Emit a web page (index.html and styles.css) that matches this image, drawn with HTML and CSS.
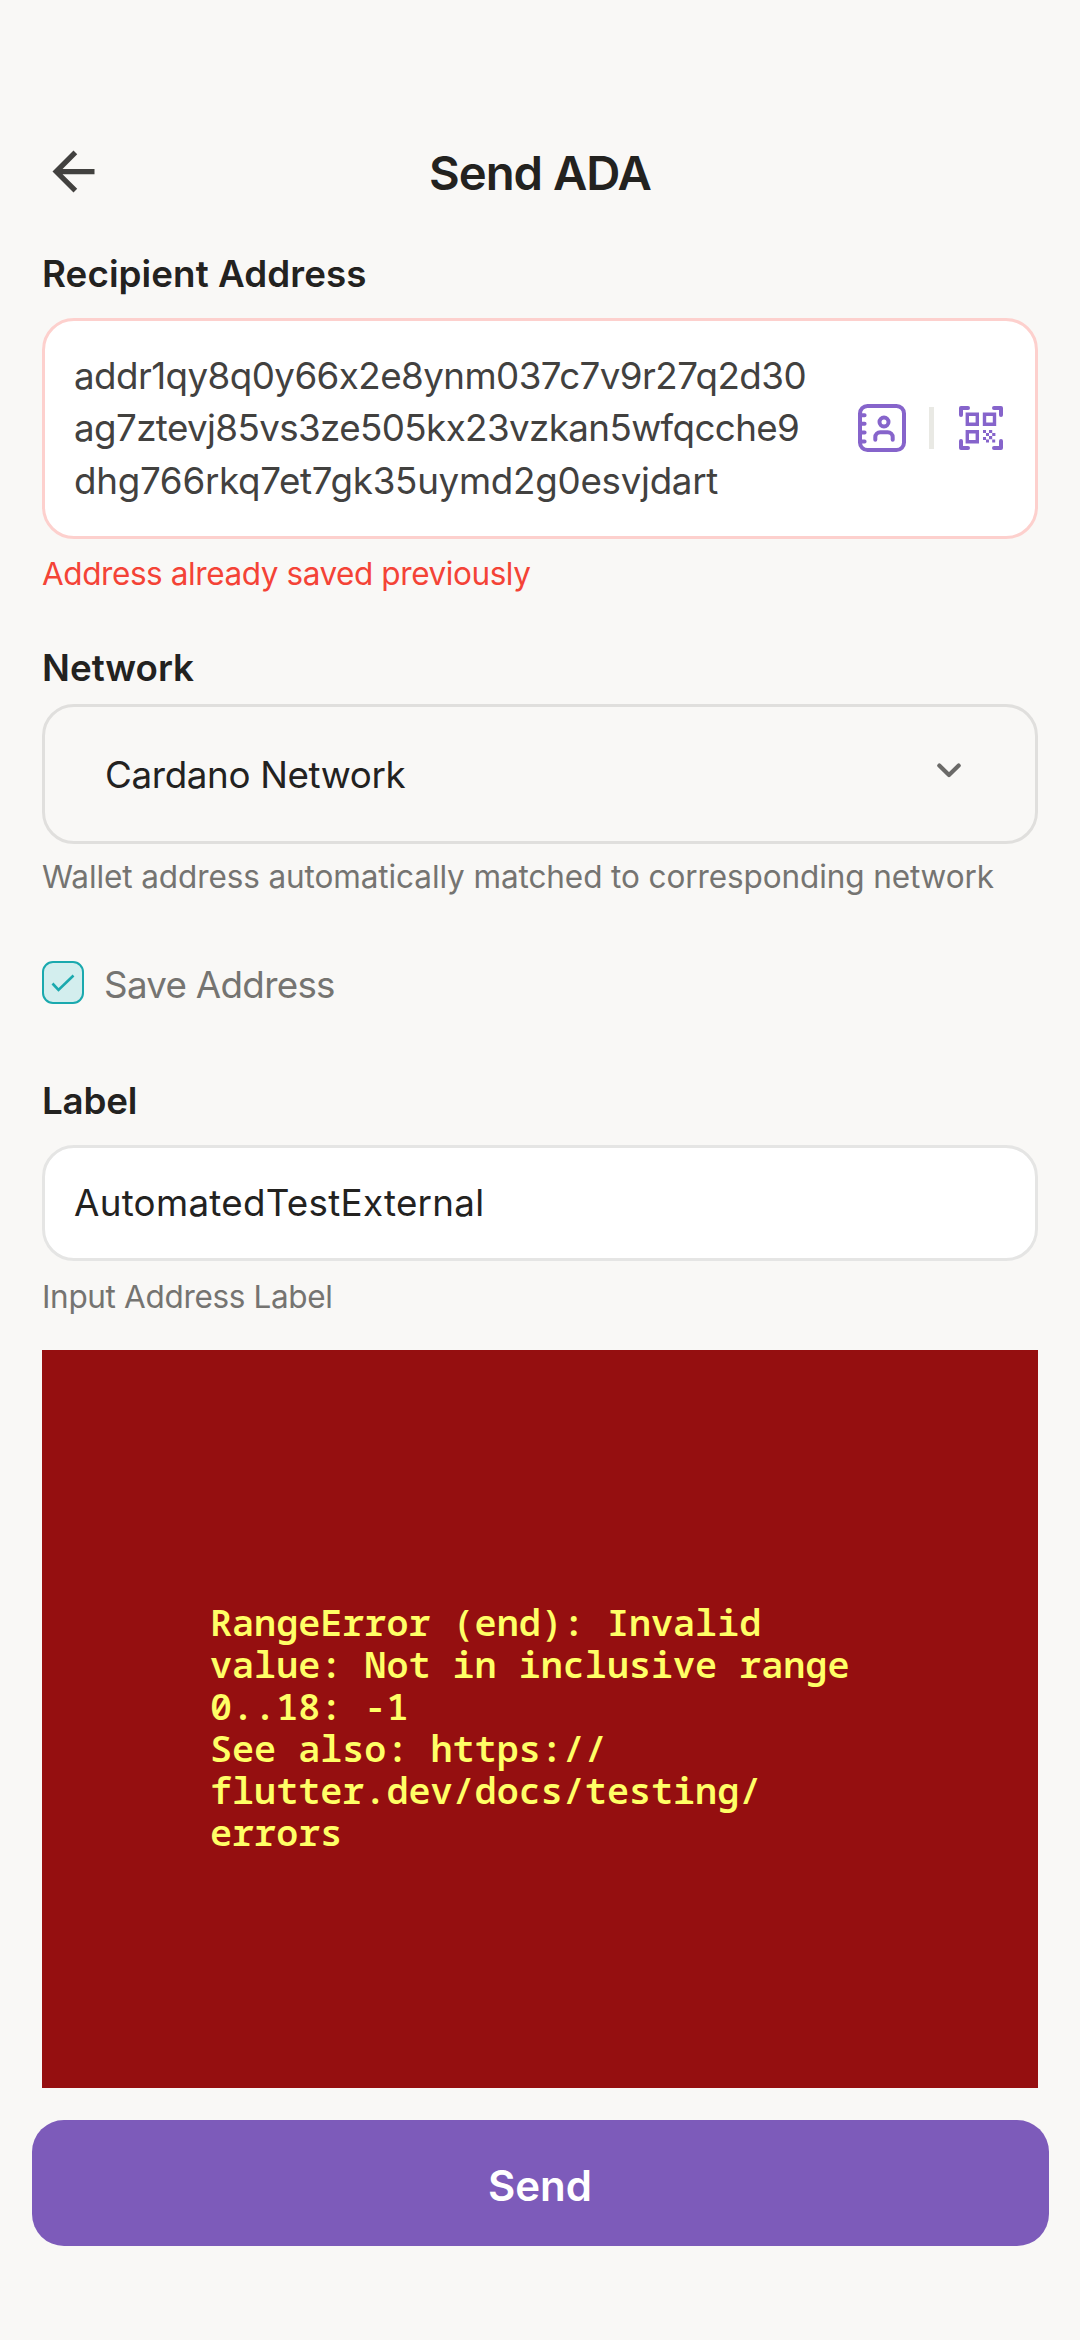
FILE: index.html
```html
<!DOCTYPE html>
<html lang="en">
<head>
<meta charset="utf-8">
<title>Send ADA</title>
<link rel="stylesheet" href="styles.css">
</head>
<body>
<main class="screen">
  <header class="header">
    <svg class="back" viewBox="0 0 24 24"><path d="M20 11H7.83l5.59-5.59L12 4l-8 8 8 8 1.41-1.41L7.83 13H20v-2z"/></svg>
    <h1 class="title"><span class="t-title">Send ADA</span></h1>
  </header>

  <section class="field recipient">
    <h2 class="label"><span class="t-recipient">Recipient Address</span></h2>
    <div class="box address-box">
      <p class="address"><span class="a1">addr1qy8q0y66x2e8ynm037c7v9r27q2d30</span><br><span class="a2">ag7ztevj85vs3ze505kx23vzkan5wfqcche9</span><br><span class="a3">dhg766rkq7et7gk35uymd2g0esvjdart</span></p>
      <div class="actions">
        <svg class="contacts" viewBox="0 0 48 48">
          <rect x="2" y="2" width="44" height="44" rx="7.5"/>
          <path d="M2 11.2h4.6M2 19.7h4.6M2 28.6h4.6M2 37.6h4.6"/>
          <circle cx="26" cy="18" r="4.5"/>
          <path d="M17.3 35.8v-2.6a5 5 0 0 1 5-5h7.4a5 5 0 0 1 5 5v2.6"/>
        </svg>
        <span class="divider"></span>
        <svg class="qr" viewBox="0 0 44 44">
          <path class="corner" d="M2 9V2h7M35 2h7v7M42 35v7h-7M9 42H2v-7"/>
          <path class="finder" d="M8.3 8.3h10v10h-10zM25.5 8.3h10v10h-10zM8.3 25.7h10v10h-10z"/>
          <path class="dots" d="M24 24h3v3h-3zM30 24h3.2v3H30zM27 27h3v3h-3zM33.2 27h3.2v3h-3.2zM30 30h3.2v3.2H30zM24 31h3v3h-3zM27 33.6h3v3h-3zM33.2 33.6h3v3h-3z"/>
        </svg>
      </div>
    </div>
    <p class="hint error"><span class="t-error">Address already saved previously</span></p>
  </section>

  <section class="field network">
    <h2 class="label"><span class="t-network">Network</span></h2>
    <div class="box select">
      <span class="t-cardano">Cardano Network</span>
      <svg class="chevron" viewBox="0 0 24 15"><path d="M2.3 2.6 12 12l9.7-9.4"/></svg>
    </div>
    <p class="hint"><span class="t-wallet">Wallet address automatically matched to corresponding network</span></p>
  </section>

  <div class="save">
    <span class="checkbox"><svg class="check" viewBox="0 0 24 18"><path d="M1.5 9.5 7.5 16 22.5 1.5"/></svg></span>
    <span class="save-text"><span class="t-save">Save Address</span></span>
  </div>

  <section class="field naming">
    <h2 class="label"><span class="t-label">Label</span></h2>
    <div class="box input"><span class="t-auto">AutomatedTestExternal</span></div>
    <p class="hint"><span class="t-input">Input Address Label</span></p>
  </section>

  <div class="crash">
    <p class="crash-text">RangeError (end): Invalid<br>value: Not in inclusive range<br>0..18: -1<br>See also: https://<br>flutter.dev/docs/testing/<br>errors</p>
  </div>

  <div class="send"><span class="t-send">Send</span></div>
</main>
</body>
</html>
```
FILE: styles.css
```css
* { box-sizing: border-box; }
body {
  margin: 0;
  background: #f9f8f6;
  font-family: Inter, "Liberation Sans", sans-serif;
  font-size: 36.75px;
  font-feature-settings: "calt" 0;
  color: #23221f;
}
h1, h2, p { margin: 0; }
svg { display: block; flex: none; }
.screen {
  width: 1080px;
  height: 2340px;
  padding: 140px 42px 0;
  overflow: hidden;
}
.header {
  display: grid;
  grid-template-columns: 63px 1fr 63px;
  height: 66px;
}
.back { width: 63px; height: 63px; fill: #42413f; }
.title { font-size: 47.25px; line-height: 66px; font-weight: 600; text-align: center; white-space: nowrap; }

.t-title { letter-spacing: -1px; }
.t-recipient { letter-spacing: 0.08px; }
.a1 { letter-spacing: -0.57px; }
.a2 { letter-spacing: -0.61px; }
.a3 { letter-spacing: -0.28px; }
.t-error { letter-spacing: -0.42px; }
.t-cardano { letter-spacing: -0.35px; }
.t-wallet { letter-spacing: -0.1px; }
.t-save { letter-spacing: -0.7px; }
.t-label { letter-spacing: -0.2px; }
.t-auto { letter-spacing: 0.28px; }
.t-input { letter-spacing: -0.34px; }

.field { display: flex; flex-direction: column; }
.recipient { margin-top: 42.6px; }
.label { font-size: 36.75px; line-height: 50px; font-weight: 600; white-space: nowrap; }
.box {
  display: flex;
  align-items: center;
  justify-content: space-between;
  border: 3px solid #e5e5e4;
  border-radius: 32px;
  background: #fff;
  white-space: nowrap;
}
.address-box { margin-top: 19.4px; height: 221px; padding: 0 32px 0 29px; border-color: #fdd0cd; }
.address { line-height: 52.5px; color: #42413f; }
.actions { display: flex; align-items: center; }
.contacts { width: 48px; height: 48px; fill: none; stroke: #8664cb; stroke-width: 4; stroke-linecap: round; }
.divider { width: 5.25px; height: 42px; margin: 0 25px 0 23px; background: #e9e9e4; }
.qr { width: 44px; height: 44px; fill: none; stroke: #8664cb; }
.corner { stroke-width: 4; stroke-linecap: round; stroke-linejoin: round; }
.finder { stroke-width: 3.4; }
.dots { fill: #8664cb; stroke: none; }
.hint { font-size: 31.5px; line-height: 42px; color: #757471; white-space: nowrap; margin-top: 12px; }
.recipient .hint { margin-top: 14.4px; }
.hint.error { color: #f44336; }

.network { margin-top: 47.6px; }
.select { margin-top: 11.4px; height: 140px; padding: 0 74px 0 60px; border-color: #e0dfdd; background: transparent; }
.chevron { width: 24px; height: 15px; margin-bottom: 7px; fill: none; stroke: #6b6a68; stroke-width: 4.2; stroke-linecap: round; stroke-linejoin: round; }

.save { display: flex; align-items: center; gap: 20px; height: 43px; margin-top: 63px; }
.checkbox {
  display: flex;
  align-items: center;
  justify-content: center;
  width: 42px;
  height: 43px;
  border: 2px solid #1aa9ae;
  border-radius: 11px;
  background: #d3eeee;
}
.check { width: 24px; height: 18px; fill: none; stroke: #1aa9ae; stroke-width: 2.6; }
.save-text { color: #757471; font-weight: 400; padding-top: 4px; white-space: nowrap; }

.naming { margin-top: 71.6px; }
.input { margin-top: 19.4px; height: 116px; padding: 0 29px; }
.t-auto { padding-bottom: 2px; }
.naming .hint { margin-top: 14.5px; }

.crash {
  display: flex;
  align-items: center;
  height: 738px;
  margin-top: 32.5px;
  padding: 16px 168px 0;
  background: #950f10;
}
.crash-text {
  font-family: "Noto Sans Mono", "DejaVu Sans Mono", monospace;
  font-size: 36.75px;
  line-height: 42px;
  font-weight: 600;
  color: #ffff66;
  white-space: nowrap;
}
.send {
  display: flex;
  align-items: center;
  justify-content: center;
  height: 126px;
  margin: 31.5px -10.5px 0;
  padding-top: 5px;
  border-radius: 32px;
  background: #7d5bba;
  color: #fff;
  font-size: 42px;
  font-weight: 600;
}
```
